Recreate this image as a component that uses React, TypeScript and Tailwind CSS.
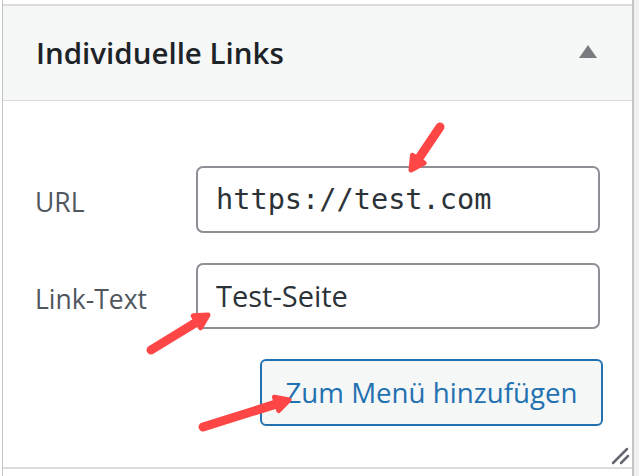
import React from "react";

type Pt = [number, number];

// red annotation arrow: shaft + small rounded head
const Arrow = ({ from, to }: { from: Pt; to: Pt }) => {
  const dx = to[0] - from[0];
  const dy = to[1] - from[1];
  const len = Math.hypot(dx, dy);
  const ux = dx / len;
  const uy = dy / len;
  const bx = to[0] - ux * 13;
  const by = to[1] - uy * 13;
  const w1: Pt = [bx - uy * 7, by + ux * 7];
  const w2: Pt = [bx + uy * 7, by - ux * 7];
  return (
    <g>
      <line
        x1={from[0]}
        y1={from[1]}
        x2={bx}
        y2={by}
        stroke="#ff4646"
        strokeWidth={9}
        strokeLinecap="round"
      />
      <polygon
        points={`${to[0]},${to[1]} ${w1[0]},${w1[1]} ${w2[0]},${w2[1]}`}
        fill="#ff4646"
        stroke="#ff4646"
        strokeWidth={5}
        strokeLinejoin="round"
      />
    </g>
  );
};

const App = () => {
  return (
    <div
      className="relative flex h-[476px] w-[639px] overflow-hidden bg-white"
      style={{ fontFamily: '"Open Sans", "Noto Sans", sans-serif' }}
    >
      <div className="w-[2px] shrink-0 bg-white" />
      <div className="flex w-[632px] shrink-0 flex-col border-l border-r-2 border-[#c3c4c7]">
        <div className="h-[4px] bg-white" />
        <div className="flex h-[97px] items-center justify-between border-t-2 border-b border-t-[#dcdcde] border-b-[#dcdcde] bg-[#f6f7f7] pl-[33px] pr-[35px]">
          <h3 className="text-[29.5px] font-semibold leading-none text-[#1d2327]">
            Individuelle Links
          </h3>
          <svg width="18" height="13" viewBox="0 0 18 13" className="mt-[-4px]">
            <polygon points="9,0 18,13 0,13" fill="#787c82" />
          </svg>
        </div>

        <div className="relative flex h-[368px] flex-col gap-[30px] border-b-2 border-[#dcdcde] pt-[65px] pl-[32px]">
          <div className="flex items-center">
            <label className="w-[161px] pt-[7px] text-[26.5px] text-[#50575e]">URL</label>
            <div className="flex h-[67px] w-[404px] items-center rounded-[7px] border-2 border-[#8c8f94] pl-[18px]">
              <span
                className="text-[28.6px] text-[#2c3338]"
                style={{ fontFamily: '"DejaVu Sans Mono", "Liberation Mono", monospace' }}
              >
                https://test.com
              </span>
            </div>
          </div>
          <div className="flex items-center">
            <label className="w-[161px] pt-[7px] text-[26.5px] text-[#50575e]">Link-Text</label>
            <div className="flex h-[66px] w-[404px] items-center rounded-[7px] border-2 border-[#8c8f94] pl-[18px]">
              <span className="text-[29px] text-[#2c3338]">Test-Seite</span>
            </div>
          </div>
          <div className="flex pl-[225px]">
            <button className="flex h-[67px] w-[343px] items-center justify-center rounded-[6px] border-2 border-[#2271b1] bg-[#f6f7f7] text-[27.7px] text-[#2271b1]">
              Zum Menü hinzufügen
            </button>
          </div>

          {/* resize grip */}
          <svg width="22" height="20" viewBox="0 0 22 20" className="absolute right-[1px] bottom-[1px]">
            <line x1="4" y1="17" x2="18" y2="3" stroke="#646970" strokeWidth="2.5" strokeLinecap="round" />
            <line x1="12" y1="17" x2="19" y2="10" stroke="#646970" strokeWidth="2.5" strokeLinecap="round" />
          </svg>
        </div>
        <div className="flex-1 bg-white" />
      </div>
      <div className="flex-1 bg-[#f0f0f1]" />

      <svg className="pointer-events-none absolute inset-0" width="639" height="476">
        <Arrow from={[440, 127]} to={[411, 170]} />
        <Arrow from={[151, 350]} to={[208, 315]} />
        <Arrow from={[203, 427]} to={[289, 400]} />
      </svg>
    </div>
  );
};

export default App;
